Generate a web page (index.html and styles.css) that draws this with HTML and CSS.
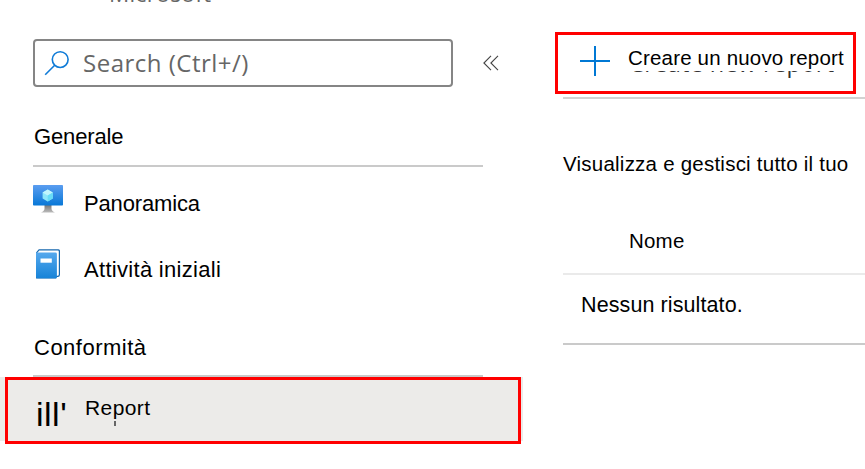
FILE: index.html
```html
<!DOCTYPE html>
<html lang="it">
<head>
<meta charset="utf-8">
<title>Report</title>
<link rel="stylesheet" href="styles.css">
</head>
<body>
<div class="app">
  <aside class="sidebar">
    <div class="publisher">Microsoft</div>
    <div class="search-row">
      <div class="search">
        <svg class="search-icon" width="26" height="26" viewBox="0 0 26 26"><circle cx="16.2" cy="9.6" r="7.9"/><path d="M10.7 15.2 1.2 24.7"/></svg>
        <span class="search-text">Search (Ctrl+/)</span>
      </div>
      <svg class="collapse" width="16" height="16" viewBox="0 0 16 16"><path d="M8 .8.9 8 8 15.2M15 .8 7.9 8 15 15.2"/></svg>
    </div>
    <h2 class="group general"><span>Generale</span></h2>
    <div class="item overview">
      <svg width="30" height="28" viewBox="0 0 30 28">
        <defs>
          <linearGradient id="screen" x2="0" y2="1"><stop stop-color="#5b9df0"/><stop offset="1" stop-color="#0878d7"/></linearGradient>
          <linearGradient id="stand" x2="0" y2="1"><stop stop-color="#777"/><stop offset="1" stop-color="#bcbcbc"/></linearGradient>
        </defs>
        <path fill="url(#stand)" d="M11.500 20h7v3.500q0 2.500 3.500 4h-14q3.500-1.500 3.500-4z"/>
        <rect width="30" height="20.500" rx=".8" fill="url(#screen)"/>
        <path fill="#8de7fa" d="m14.700 4.500 5.100 3v6l-5.100 3-5.100-3v-6z"/>
        <path fill="#c0f5fd" d="m14.700 4.500 5.100 3-5.100 3-5.100-3z"/>
        <path fill="#68dcf7" d="m14.700 10.500 5.100-3v6l-5.100 3z"/>
      </svg>
      <span>Panoramica</span>
    </div>
    <div class="item start">
      <svg width="30" height="30" viewBox="0 0 30 30">
        <defs><linearGradient id="cover" x2="0" y2="1"><stop stop-color="#55a8ed"/><stop offset="1" stop-color="#1683d8"/></linearGradient></defs>
        <path fill="#1768ae" d="M5.800.3H25.500q1.500 0 1.500 1.500v24q0 2.200-2.200 2.200H23v1.500H3V3.500z"/>
        <path fill="#fff" d="M6.200 1.600H25q.8 0 .8.800v23.200q0 1.200-1.200 1.200H23V4H4.200z"/>
        <path fill="url(#cover)" d="M3 3.500h19.500q1.400 0 1.400 1.400v24.400H4.500Q3 29.300 3 27.800z"/>
        <path fill="#fff" d="M7.500 9.500h11.300v4.200H7.500z"/>
      </svg>
      <span>Attività iniziali</span>
    </div>
    <h2 class="group compliance"><span>Conformità</span></h2>
    <div class="item report">
      <span class="bars">ill'</span>
      <span class="report-label">Report</span>
      <i class="tail"></i>
      <div class="highlight"></div>
    </div>
  </aside>
  <main class="main">
    <div class="create">
      <svg width="30" height="30" viewBox="0 0 30 30"><path d="M15 0v30M0 15h30"/></svg>
      <span class="create-label">Creare un nuovo report</span>
      <span class="underlay">Create new report</span>
    </div>
    <div class="content">
      <p class="intro">Visualizza e gestisci tutto il tuo</p>
      <div class="head">Nome</div>
      <div class="empty">Nessun risultato.</div>
    </div>
  </main>
</div>
</body>
</html>
```

FILE: styles.css
```css
* { box-sizing: border-box; }
body {
  margin: 0;
  background: #fff;
  color: #000;
  font-family: "Liberation Sans", Arial, sans-serif;
  overflow: hidden;
}
svg { display: block; flex: none; }
.app { display: flex; width: 865px; height: 469px; overflow: hidden; }
.sidebar { width: 523px; flex: none; }
.publisher {
  height: 39px;
  padding-left: 109px;
  font: 22.5px/30px "Open Sans", sans-serif;
  color: #666;
  margin-top: -21px;
  margin-bottom: 21px;
  letter-spacing: .35px;
}
.search-row { display: flex; align-items: center; height: 48px; padding-left: 33px; }
.search {
  display: flex;
  align-items: center;
  width: 420px;
  height: 48px;
  border: 2px solid #858585;
  border-radius: 4px;
  padding-left: 9px;
}
.search-icon { fill: none; stroke: #0f7bd7; stroke-width: 1.6; }
.search-text {
  margin-left: 13px;
  font: 24px/30px "Open Sans", sans-serif;
  letter-spacing: .5px;
  color: #666;
  white-space: nowrap;
}
.collapse { margin-left: 30px; fill: none; stroke: #444; stroke-width: 1.1; }
.group {
  margin: 0 0 0 33px;
  padding-left: 1px;
  width: 450px;
  border-bottom: 2px solid #cacaca;
  font-size: 22px;
  font-weight: 400;
  line-height: 26px;
}
.general { height: 80px; padding-top: 37px; letter-spacing: -.15px; }
.compliance { height: 79px; padding-top: 37px; letter-spacing: .5px; }
.item { display: flex; padding-left: 33px; font-size: 22px; line-height: 26px; }
.item > span { white-space: nowrap; }
.overview { height: 66px; padding-top: 18px; }
.overview span { margin: 6px 0 0 21px; letter-spacing: -.15px; }
.start { height: 65px; padding-top: 16px; }
.start span { margin: 8px 0 0 21px; letter-spacing: .3px; }
.report { position: relative; height: 64px; background: #ecebe9; }
.bars { width: 52px; padding: 17px 0 0 3px; font-size: 34px; line-height: 40px; letter-spacing: .5px; }
.report-label { padding-top: 18px; font-size: 21px; letter-spacing: .4px; }
.tail { position: absolute; left: 114px; top: 44px; width: 2px; height: 5px; background: #666; }
.highlight { position: absolute; left: 5px; top: 0; width: 516px; height: 67px; border: 3px solid #f00; }
.main { flex: none; width: 342px; padding: 32px 0 0 32px; }
.create {
  position: relative;
  display: flex;
  width: 301px;
  height: 62px;
  border: 3px solid #f00;
  padding: 11px 0 0 22px;
}
.create svg { stroke: #0078d4; stroke-width: 2; }
.create-label { margin: 0 0 0 18px; font-size: 20.5px; line-height: 24px; letter-spacing: .18px; white-space: nowrap; }
.underlay {
  position: absolute;
  left: 71px;
  top: 13px;
  font: 23.500px/30px "Open Sans", sans-serif;
  letter-spacing: .35px;
  color: #333;
  white-space: nowrap;
  clip-path: inset(23px 0 0 0);
}
.content { margin: 3px 0 0 8px; border-top: 2px solid #d2d2d2; }
.intro { margin: 0; height: 115px; padding-top: 53px; font-size: 20.5px; line-height: 24px; letter-spacing: .23px; white-space: nowrap; }
.head { height: 61px; padding: 15px 0 0 66px; border-bottom: 2px solid #eaeaea; font-size: 20.5px; line-height: 24px; letter-spacing: .2px; }
.empty { height: 70px; padding: 18px 0 0 18px; border-bottom: 2px solid #cacaca; font-size: 21.5px; line-height: 24px; letter-spacing: .1px; }
```
